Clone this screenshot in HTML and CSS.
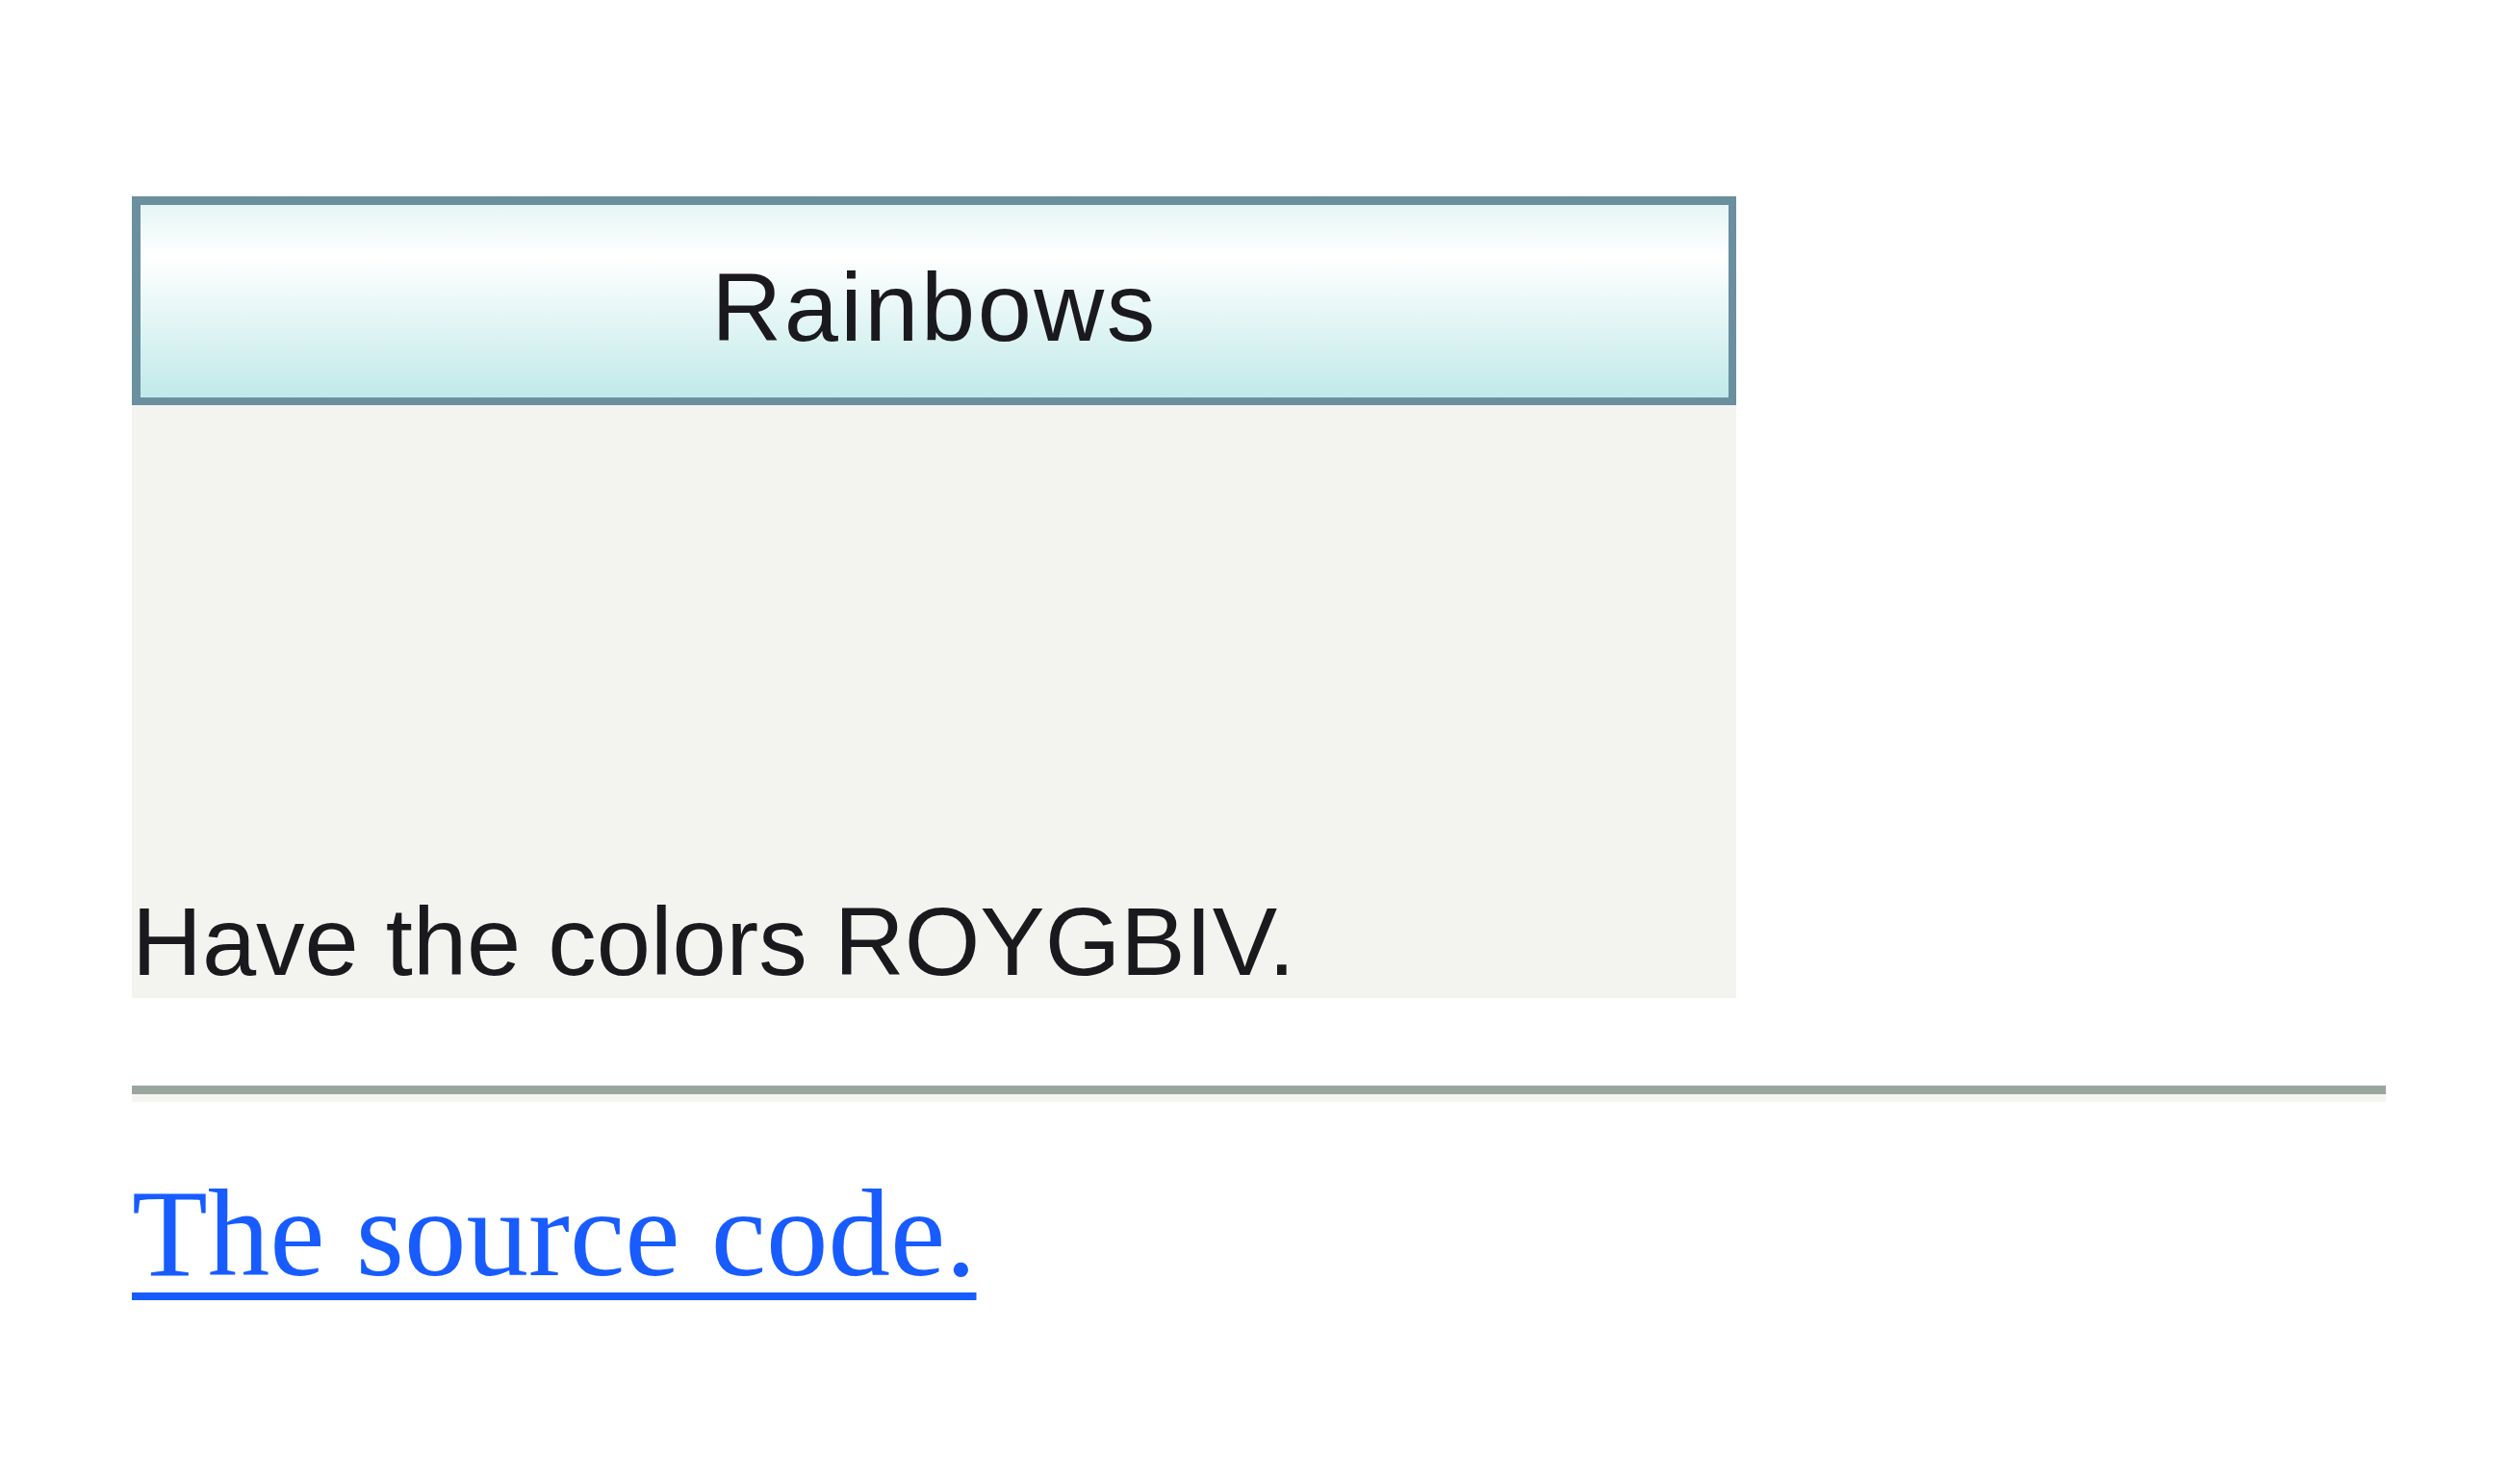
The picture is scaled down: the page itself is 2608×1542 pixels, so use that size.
FILE: index.html
```html
<!DOCTYPE html>
<html>
<head>
<meta charset="utf-8">
<title>Rainbows</title>
<link rel="stylesheet" href="styles.css">
</head>
<body>
<div class="page">
  <div class="card">
    <div class="card-head">Rainbows</div>
    <div class="card-body">Have the colors ROYGBIV.</div>
  </div>
  <hr class="rule">
  <a class="source" href="#">The source code.</a>
</div>
</body>
</html>
```
FILE: styles.css
```css
html, body {
  margin: 0;
  padding: 0;
  background: #ffffff;
}
.page {
  padding: 204px 129px 0 137px;
}
.card {
  width: 1667px;
  font-family: "Liberation Sans", Arial, sans-serif;
  font-size: 101px;
  color: #1a1a1e;
}
.card-head {
  border-style: solid;
  border-color: #6a8f9e;
  border-width: 9px 8px 8px 9px;
  padding-top: 12px;
  line-height: 188px;
  text-align: center;
  letter-spacing: 2.5px;
  background: linear-gradient(to bottom, #e6f5f5 0%, #ffffff 27%, #c1e9e9 100%);
}
.card-body {
  background: #f3f4f0;
  padding-top: 498px;
  line-height: 118px;
}
.rule {
  margin: 91px 0 0 0;
  height: 0;
  border: 0;
  border-top: 9px solid #99a69f;
  border-bottom: 8px solid #f4f5f1;
}
.source {
  display: inline-block;
  margin-top: 63px;
  font-family: "Liberation Serif", "Times New Roman", serif;
  font-size: 129px;
  line-height: 1.15;
  color: #185cff;
  text-decoration: underline;
  text-decoration-thickness: 8px;
  text-underline-offset: 18px;
}
```
